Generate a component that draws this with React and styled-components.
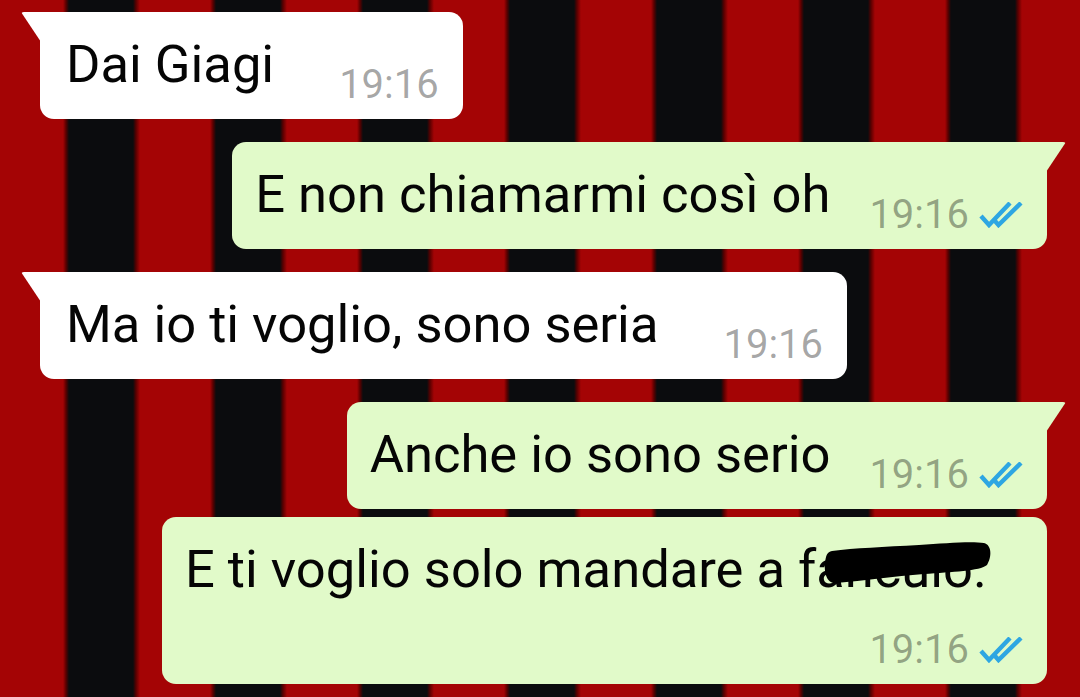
import React from "react"
import styled, { createGlobalStyle, css } from "styled-components"

const GlobalStyle = createGlobalStyle`
  html, body {
    margin: 0;
    padding: 0;
    width: 100%;
    height: 100%;
    overflow: hidden;
  }
  body {
    font-family: Roboto, "Noto Sans", "Liberation Sans", sans-serif;
  }
`

const messages = [
  { id: 1, out: false, tail: true, text: "Dai Giagi" },
  { id: 2, out: true, tail: true, text: "E non chiamarmi così oh" },
  { id: 3, out: false, tail: true, text: "Ma io ti voglio, sono seria" },
  { id: 4, out: true, tail: true, text: "Anche io sono serio" },
  { id: 5, out: true, tail: false, text: "E ti voglio solo mandare a f", hidden: "anculo", after: "." },
]

function Ticks() {
  return (
    <TickSvg viewBox="0 0 44 26" width="44" height="26">
      <path d="M2 14 L10 23 L31 1" />
      <path d="M16 19 L19.5 23 L42 1" />
    </TickSvg>
  )
}

function Scribble() {
  return (
    <ScribbleSvg viewBox="0 0 168 46" width="168" height="46" preserveAspectRatio="none">
      <path d="M8 10 C 30 7, 60 6, 95 4 C 122 2, 148 0, 160 2 C 168 4, 168 16, 163 24 C 156 30, 128 31, 100 33 C 70 35, 40 40, 12 42 C 3 43, 0 32, 1 22 C 2 14, 3 11, 8 10 Z" />
    </ScribbleSvg>
  )
}

export default function App() {
  return (
    <>
      <GlobalStyle />
      <Screen>
        {messages.map((m, i) => (
          <Bubble key={m.id} $out={m.out} $tail={m.tail} $first={i === 0}>
            <Text>
              {m.text}
              {m.hidden && (
                <>
                  <Redacted>
                    {m.hidden}
                    <Scribble />
                  </Redacted>
                  {m.after}
                </>
              )}
            </Text>
            <Meta $out={m.out}>
              <Time>19:16</Time>
              {m.out && <Ticks />}
            </Meta>
          </Bubble>
        ))}
      </Screen>
    </>
  )
}

const Screen = styled.div`
  width: 1080px;
  height: 697px;
  box-sizing: border-box;
  padding: 12px 33px 0 40px;
  display: flex;
  flex-direction: column;
  overflow: hidden;
  background-color: #a40405;
  background-image: linear-gradient(
    90deg,
    #5a0000 0px,
    #0b0c0e 3px,
    #0b0c0e 67px,
    #5a0000 70px,
    #a40405 74px,
    #a40405 144px,
    #5a0000 147px
  );
  background-size: 147px 100%;
  background-position: 66px 0;
`

const Bubble = styled.div`
  position: relative;
  align-self: ${(p) => (p.$out ? "flex-end" : "flex-start")};
  max-width: 885px;
  box-sizing: border-box;
  display: flex;
  flex-wrap: wrap;
  row-gap: 13px;
  padding: 22px 24px 11px ${(p) => (p.$out ? "23px" : "26px")};
  margin-top: ${(p) => (p.$first ? "0" : p.$tail ? "23px" : "8px")};
  background: ${(p) => (p.$out ? "#e1fac9" : "#ffffff")};
  border-radius: 14px;
  color: #050505;

  ${(p) =>
    p.$tail &&
    css`
      ${p.$out ? "border-top-right-radius: 0;" : "border-top-left-radius: 0;"}
      &::before {
        content: "";
        position: absolute;
        top: 0;
        ${p.$out ? "right: -19px;" : "left: -19px;"}
        width: 20px;
        height: 30px;
        background: inherit;
        border-radius: ${p.$out ? "0 3px 0 0" : "3px 0 0 0"};
        clip-path: ${p.$out
          ? "polygon(0 0, 100% 0, 0 100%)"
          : "polygon(0 0, 100% 0, 100% 100%)"};
      }
    `}
`

const Text = styled.div`
  font-size: 52.5px;
  line-height: 60px;
  margin-bottom: 14px;
  white-space: nowrap;
`

const Redacted = styled.span`
  position: relative;
`

const ScribbleSvg = styled.svg`
  position: absolute;
  left: 8px;
  top: 3px;
  fill: #000;
`

const Meta = styled.div`
  margin-left: auto;
  padding-left: ${(p) => (p.$out ? "39px" : "65px")};
  display: flex;
  align-items: baseline;
  gap: 10px;
  align-self: flex-end;
`

const Time = styled.span`
  font-size: 40px;
  line-height: 47px;
  color: rgba(0, 0, 0, 0.36);
`

const TickSvg = styled.svg`
  fill: none;
  stroke: #2ea6e2;
  stroke-width: 4.4;
`
